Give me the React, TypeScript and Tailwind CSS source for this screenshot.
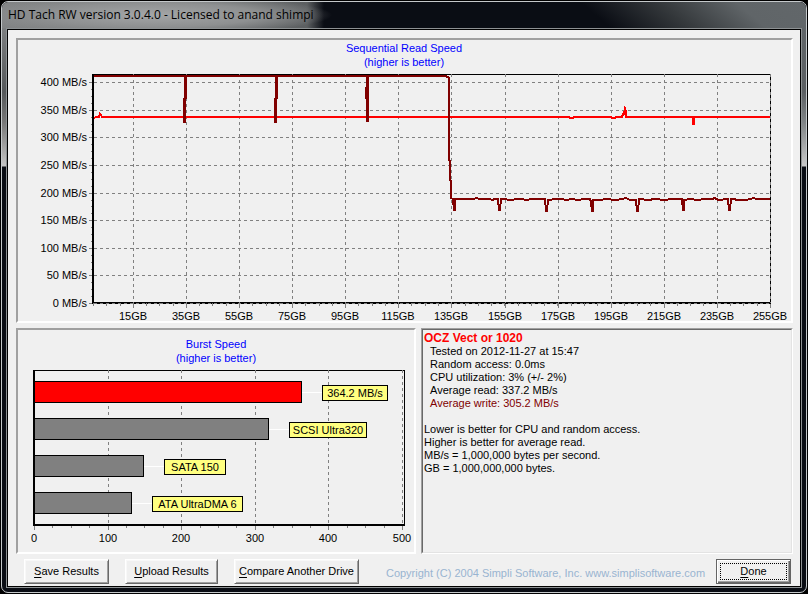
import type { ReactNode } from "react";

const GRAY = "#808080";
const MAROON = "#800000";

const speedRows = [
  { y: 82, label: "400 MB/s" },
  { y: 110, label: "350 MB/s" },
  { y: 137, label: "300 MB/s" },
  { y: 165, label: "250 MB/s" },
  { y: 193, label: "200 MB/s" },
  { y: 220, label: "150 MB/s" },
  { y: 248, label: "100 MB/s" },
  { y: 275, label: "50 MB/s" },
  { y: 303, label: "0 MB/s" },
];

const capacityColumns = [
  { x: 133, label: "15GB" },
  { x: 186, label: "35GB" },
  { x: 239, label: "55GB" },
  { x: 292, label: "75GB" },
  { x: 345, label: "95GB" },
  { x: 398, label: "115GB" },
  { x: 451, label: "135GB" },
  { x: 505, label: "155GB" },
  { x: 558, label: "175GB" },
  { x: 611, label: "195GB" },
  { x: 664, label: "215GB" },
  { x: 717, label: "235GB" },
  { x: 770, label: "255GB" },
];

const readSeries =
  "94,118 96,117 99,117 100,114 101,115 102,117 569,117 570,118 573,118 574,117 611,117 612,118 615,118 616,117 622,117 623,114 624,114 625,109 626,112 626,117 692,117 693,117 693,124 694,124 694,117 770,117";

const writeSeries =
  "94,76 184,76 186,77 186,98 185,98 185,122 184,122 185,76 275,76 277,77 277,98 276,98 276,122 275,122 276,76 366,76 367,76 366,98 368,98 368,121 367,121 368,76 446,76 449,78 449,160 450,161 450,180 451,181 451,198 453,199 454,210 455,210 455,199 474,199 476,198 480,199 490,199 492,200 495,199 498,199 499,210 500,210 501,199 512,200 516,199 522,199 526,200 532,199 545,199 546,211 547,211 548,200 556,199 562,199 566,200 572,199 578,200 584,199 590,199 591,202 592,211 593,211 593,200 600,200 606,199 616,200 622,199 626,198 630,200 636,200 637,211 638,211 639,199 648,200 655,199 664,200 672,199 682,199 683,210 684,210 684,200 690,199 698,200 704,199 712,199 715,198 718,200 728,199 729,210 730,210 731,199 740,200 746,200 754,198 756,199 770,199";

const capacityMinor = Array.from({ length: 51 }, (_, i) => Math.round(93 + i * 13.27));
const speedMinor = Array.from({ length: 33 }, (_, i) => Math.round(303 - i * 6.9));

const bursts = [
  { label: "364.2 MB/s", y: 381, end: 302, tagWidth: 66, fill: "#ff0000" },
  { label: "SCSI Ultra320", y: 418, end: 269, tagWidth: 78, fill: GRAY },
  { label: "SATA 150", y: 455, end: 144, tagWidth: 62, fill: GRAY },
  { label: "ATA UltraDMA 6", y: 492, end: 132, tagWidth: 91, fill: GRAY },
];

const burstColumns = [
  { x: 34, label: "0" },
  { x: 108, label: "100" },
  { x: 181, label: "200" },
  { x: 255, label: "300" },
  { x: 328, label: "400" },
  { x: 402, label: "500" },
];

const burstMinor = Array.from({ length: 20 }, (_, i) => Math.round(34 + i * 18.4));

function ChartTitle({ x, y, title }: { x: number; y: number; title: string }) {
  return (
    <g fill="#0000ff" textAnchor="middle">
      <text x={x} y={y}>{title}</text>
      <text x={x} y={y + 14}>(higher is better)</text>
    </g>
  );
}

function SequentialChart() {
  return (
    <svg viewBox="18 40 773 281" className="block h-auto w-full text-[11px]" role="img" aria-label="Sequential read speed">
      <ChartTitle x={404} y={52} title="Sequential Read Speed" />
      <g shapeRendering="crispEdges">
        <rect x="93" y="74" width="678" height="1" />
        <rect x="92" y="74" width="2" height="230" />
        <rect x="92" y="302" width="679" height="2" />
        <rect x="770" y="74" width="1" height="230" />
        {speedRows.map((r) => (
          <g key={r.label}>
            <path d={`M94 ${r.y}.5H770`} stroke={GRAY} strokeDasharray="3 3" />
            <path d={`M89 ${r.y}.5H92`} stroke={GRAY} />
          </g>
        ))}
        {capacityColumns.map((c) => (
          <g key={c.label}>
            <path d={`M${c.x}.5 74V303`} stroke={GRAY} strokeDasharray="3 3" />
            <path d={`M${c.x}.5 304V308`} stroke={GRAY} />
          </g>
        ))}
        {capacityMinor.map((x) => (
          <path key={x} d={`M${x}.5 303V306`} stroke={GRAY} />
        ))}
        {speedMinor.map((y) => (
          <path key={y} d={`M91 ${y}.5H92`} stroke={GRAY} />
        ))}
        <polyline points={readSeries} fill="none" stroke="#ff0000" strokeWidth="2" />
        <polyline points={writeSeries} fill="none" stroke={MAROON} strokeWidth="2" />
      </g>
      {speedRows.map((r) => (
        <text key={r.label} x="87" y={r.y + 4} textAnchor="end">{r.label}</text>
      ))}
      {capacityColumns.map((c) => (
        <text key={c.label} x={c.x} y="320" textAnchor="middle">{c.label}</text>
      ))}
    </svg>
  );
}

function BurstChart() {
  return (
    <svg viewBox="18 330 396 222" className="block h-auto w-full text-[11px]" role="img" aria-label="Burst speed">
      <ChartTitle x={216} y={348} title="Burst Speed" />
      <g shapeRendering="crispEdges">
        <rect x="33" y="370" width="372" height="1" />
        <rect x="404" y="370" width="1" height="155" />
        {burstColumns.map((c) => (
          <g key={c.label}>
            <path d={`M${c.x}.5 370V524`} stroke={GRAY} strokeDasharray="3 3" />
            <path d={`M${c.x}.5 526V530`} stroke={GRAY} />
          </g>
        ))}
        {burstMinor.map((x) => (
          <path key={x} d={`M${x}.5 526V528`} stroke={GRAY} />
        ))}
        <rect x="33" y="370" width="2" height="156" />
        <rect x="33" y="524" width="372" height="2" />
        {bursts.map((b) => (
          <g key={b.label} stroke="#000000">
            <rect x="34.5" y={b.y + 0.5} width={b.end - 35} height="21" fill={b.fill} />
            <path d={`M${b.end} ${b.y + 11}.5h20`} stroke="#ffffff" />
            <rect x={b.end + 20.5} y={b.y + 4.5} width={b.tagWidth - 1} height="15" fill="#ffff80" />
          </g>
        ))}
      </g>
      {bursts.map((b) => (
        <text key={b.label} x={b.end + 20 + b.tagWidth / 2} y={b.y + 16} textAnchor="middle">{b.label}</text>
      ))}
      {burstColumns.map((c) => (
        <text key={c.label} x={c.x} y="542" textAnchor="middle">{c.label}</text>
      ))}
    </svg>
  );
}

function Panel({ children }: { children: ReactNode }) {
  return (
    <section className="border-2 border-t-[#a0a0a0] border-r-white border-b-white border-l-[#a0a0a0]">{children}</section>
  );
}

function PushButton({ hotkey, rest, width }: { hotkey: string; rest: string; width: string }) {
  return (
    <button
      type="button"
      className={`${width} h-[25px] shrink-0 border border-t-white border-r-[#696969] border-b-[#696969] border-l-white bg-[#f0f0f0] text-center leading-[13px] whitespace-nowrap shadow-[inset_1px_1px_0_#f8f8f8,inset_-1px_-1px_0_#a0a0a0]`}
    >
      <u className="underline-offset-2">{hotkey}</u>
      {rest}
    </button>
  );
}

export default function App() {
  return (
    <div className="bg-black p-px font-['Liberation_Sans',Arial,sans-serif] text-[11px] leading-[13px] text-black">
      <div className="overflow-hidden rounded-[7px] border border-[#c4c8ca] [background:linear-gradient(180deg,#8c8e8f_0,#55585a_90px,#777_120px,#c4c4c4_164px,#0a0d14_165px)_left_top/4px_100%_no-repeat,linear-gradient(180deg,#62676a_0,#5c6063_90px,#808486_120px,#c8c8c8_164px,#0a0d14_165px)_right_top/4px_100%_no-repeat,#0a0d14]">
        <header className="flex h-[26px] items-center pl-[6px] [background:radial-gradient(ellipse_180px_20px_at_150px_13px,#a4a6a7_0,#8e9091_60%,transparent_100%),linear-gradient(90deg,#828485_0,#707374_180px,#5c5f61_305px,transparent_322px),linear-gradient(40deg,transparent_0,#0a0d14_20px,#34383b_70px,#606568_120px,#62676a_100%)_right_top/226px_26px_no-repeat,#0a0d14]">
          <h1 className="font-['Open_Sans','Noto_Sans',sans-serif] text-[12px] leading-4 whitespace-nowrap">
            HD Tach RW version 3.0.4.0 - Licensed to anand shimpi
          </h1>
        </header>
        <div className="px-1 pb-1">
          <div className="border border-[#8d9193]">
            <main className="border border-black bg-[#f0f0f0] pt-2 pb-[2px]">
              <div className="flex flex-col gap-[5px] pr-[7px] pl-2">
                <Panel>
                  <SequentialChart />
                </Panel>
                <div className="grid grid-cols-[400fr_372fr] gap-[5px]">
                  <Panel>
                    <BurstChart />
                  </Panel>
                  <section className="border border-t-[#a0a0a0] border-r-white border-b-white border-l-[#a0a0a0]">
                    <div className="h-full border border-t-[#696969] border-r-[#e3e3e3] border-b-[#e3e3e3] border-l-[#696969] pt-[2px] pl-px">
                      <h2 className="text-[12px] leading-[13px] font-bold text-[#ff0000]">OCZ Vect or 1020</h2>
                      <div className="pl-[6px]">
                        <p>Tested on 2012-11-27 at 15:47</p>
                        <p>Random access: 0.0ms</p>
                        <p>CPU utilization: 3% (+/- 2%)</p>
                        <p>Average read: 337.2 MB/s</p>
                        <p className="text-[#800000]">Average write: 305.2 MB/s</p>
                      </div>
                      <div className="pt-[13px]">
                        <p>Lower is better for CPU and random access.</p>
                        <p>Higher is better for average read.</p>
                        <p>MB/s = 1,000,000 bytes per second.</p>
                        <p>GB = 1,000,000,000 bytes.</p>
                      </div>
                    </div>
                  </section>
                </div>
              </div>
              <footer className="flex items-center justify-between pt-[5px] pr-[9px] pl-4">
                <div className="flex items-center gap-4">
                  <PushButton hotkey="S" rest="ave Results" width="w-[85px]" />
                  <PushButton hotkey="U" rest="pload Results" width="w-[93px]" />
                  <PushButton hotkey="C" rest="ompare Another Drive" width="w-[125px]" />
                </div>
                <p className="pt-1 pl-4 whitespace-nowrap text-[#99b4d1]">
                  Copyright (C) 2004 Simpli Software, Inc. www.simplisoftware.com
                </p>
                <button
                  type="button"
                  className="h-[25px] w-[75px] shrink-0 border border-[#646464] bg-[#f0f0f0] p-[3px] shadow-[inset_1px_1px_0_#ffffff,inset_-1px_-1px_0_#696969,inset_-2px_-2px_0_#a0a0a0]"
                >
                  <span className="block border border-dotted border-black leading-[15px]">
                    <u className="underline-offset-2">D</u>one
                  </span>
                </button>
              </footer>
            </main>
          </div>
        </div>
      </div>
    </div>
  );
}
